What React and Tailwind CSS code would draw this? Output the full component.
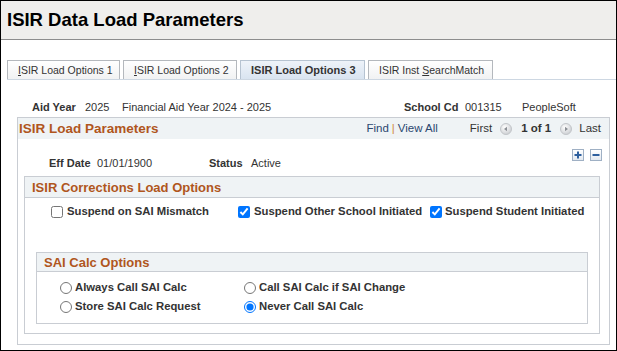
import React from "react";

const Arrow = ({ dir }) => (
  <svg width="12" height="12" viewBox="0 0 12 12" className="shrink-0">
    <defs>
      <radialGradient id={`g${dir}`} cx="40%" cy="35%" r="70%">
        <stop offset="0%" stopColor="#ffffff" />
        <stop offset="100%" stopColor="#c9ccd0" />
      </radialGradient>
    </defs>
    <circle cx="6" cy="6" r="5.5" fill={`url(#g${dir})`} stroke="#c2c5c9" />
    {dir === "left" ? <path d="M4 6 L7 3.8 L7 8.2 Z" fill="#8c9096" /> : <path d="M8 6 L5 3.8 L5 8.2 Z" fill="#8c9096" />}
  </svg>
);

const Tab = ({ children, active, width }) => (
  <div
    className={`h-[19px] flex items-center pl-[10px] border border-b-0 leading-none ${
      active
        ? "bg-gradient-to-b from-[#eef3f9] to-[#d9e4f0] border-[#b6c3d1] font-bold text-[11px] text-[#333]"
        : "bg-gradient-to-b from-white to-[#f1f2f3] border-[#b4b8bd] text-[10.5px] text-[#333]"
    } ${width}`}
  >
    {children}
  </div>
);

const Check = ({ checked }) => (
  <input type="checkbox" defaultChecked={checked} className="w-[12px] h-[12px] m-0 shrink-0" />
);

const Radio = ({ checked }) => (
  <input type="radio" name="sai" defaultChecked={checked} className="w-[12px] h-[12px] m-0 shrink-0" />
);

export default function App() {
  return (
    <div className="w-[617px] h-[351px] border border-black bg-white font-['Liberation_Sans',Arial,sans-serif] text-[#333] overflow-hidden">
      <div className="h-[39px] bg-[#efeeec] border-b border-[#8d8d8d] flex items-center pl-[6px]">
        <h1 className="text-[18.5px] font-bold text-black leading-none">ISIR Data Load Parameters</h1>
      </div>

      <div className="mt-[20px] flex items-end pl-[6px]">
        <div className="flex items-end gap-[3px] border-b border-[#cdd7e2]">
          <Tab width="w-[113px]">
            <span><span className="underline">I</span>SIR Load Options 1</span>
          </Tab>
          <Tab width="w-[114px]">
            <span><span className="underline">I</span>SIR Load Options 2</span>
          </Tab>
          <Tab active width="w-[125px]">
            ISIR Load Options 3
          </Tab>
          <Tab width="w-[125px]">
            <span>ISIR Inst <span className="underline">S</span>earchMatch</span>
          </Tab>
        </div>
        <div className="flex-1 border-b border-[#cdd7e2]" />
      </div>

      <div className="mt-[20px] h-[14px] flex items-center text-[11px] leading-none">
        <span className="ml-[31px] w-[53px] font-bold">Aid Year</span>
        <span className="w-[37px]">2025</span>
        <span className="w-[282px]">Financial Aid Year 2024 - 2025</span>
        <span className="w-[61px] font-bold">School Cd</span>
        <span className="w-[57px]">001315</span>
        <span>PeopleSoft</span>
      </div>

      <div className="mt-[3px] ml-[16px] w-[593px] h-[228px] border border-[#c9cdd3] flex flex-col">
        <div className="h-[21px] bg-[#eff3f5] flex items-center pl-[1px]">
          <span className="text-[13.5px] font-bold text-[#b0561d] leading-none">ISIR Load Parameters</span>
          <div className="ml-auto flex items-center text-[11.5px] leading-none pr-[8px]">
            <span className="text-[#2b4770]">Find</span>
            <span className="mx-[3px] text-[#d08a3c]">|</span>
            <span className="text-[#2b4770]">View All</span>
            <span className="ml-[32px]">First</span>
            <span className="ml-[8px]"><Arrow dir="left" /></span>
            <span className="ml-[9px] font-bold">1 of 1</span>
            <span className="ml-[9px]"><Arrow dir="right" /></span>
            <span className="ml-[7px]">Last</span>
          </div>
        </div>

        <div className="mt-[10px] flex justify-end gap-[6px] pr-[7px]">
          <div className="w-[12px] h-[12px] border border-[#9fb0c4] bg-gradient-to-b from-white to-[#e3e9f0] flex items-center justify-center">
            <svg width="8" height="8" viewBox="0 0 8 8"><path d="M4 0.5 V7.5 M0.5 4 H7.5" stroke="#2d5f9e" strokeWidth="2" /></svg>
          </div>
          <div className="w-[12px] h-[12px] border border-[#9fb0c4] bg-gradient-to-b from-white to-[#e3e9f0] flex items-center justify-center">
            <svg width="8" height="8" viewBox="0 0 8 8"><path d="M0.5 4 H7.5" stroke="#2d5f9e" strokeWidth="2" /></svg>
          </div>
        </div>

        <div className="-mt-[5px] h-[14px] flex items-center text-[11px] leading-none">
          <span className="ml-[31px] w-[48px] font-bold">Eff Date</span>
          <span className="w-[112px]">01/01/1900</span>
          <span className="w-[42px] font-bold">Status</span>
          <span>Active</span>
        </div>

        <div className="mt-[6px] ml-[6px] mr-[9px] h-[158px] border border-[#c9cdd3] flex flex-col">
          <div className="h-[21px] bg-[#eff3f5] border-b border-[#c9cdd3] flex items-center pl-[7px]">
            <span className="text-[13px] font-bold text-[#b0561d] leading-none">ISIR Corrections Load Options</span>
          </div>
          <div className="mt-[7px] h-[14px] flex items-center text-[11.3px] font-bold leading-none">
            <div className="ml-[26px] w-[187px] flex items-center gap-[4px]">
              <Check />
              <span>Suspend on SAI Mismatch</span>
            </div>
            <div className="w-[192px] flex items-center gap-[4px]">
              <Check checked />
              <span>Suspend Other School Initiated</span>
            </div>
            <div className="flex items-center gap-[3px]">
              <Check checked />
              <span>Suspend Student Initiated</span>
            </div>
          </div>

          <div className="mt-[33px] mx-[11px] h-[72px] border border-[#c9cdd3] flex flex-col">
            <div className="h-[19px] bg-[#eff3f5] border-b border-[#c9cdd3] flex items-center pl-[7px]">
              <span className="text-[13px] font-bold text-[#b0561d] leading-none">SAI Calc Options</span>
            </div>
            <div className="mt-[9px] grid grid-cols-[207px_1fr] gap-y-[6px] text-[11.3px] font-bold leading-none">
              <div className="ml-[23px] flex items-center gap-[3px] h-[13px]">
                <Radio />
                <span>Always Call SAI Calc</span>
              </div>
              <div className="flex items-center gap-[3px] h-[13px]">
                <Radio />
                <span>Call SAI Calc if SAI Change</span>
              </div>
              <div className="ml-[23px] flex items-center gap-[3px] h-[13px]">
                <Radio />
                <span>Store SAI Calc Request</span>
              </div>
              <div className="flex items-center gap-[3px] h-[13px]">
                <Radio checked />
                <span>Never Call SAI Calc</span>
              </div>
            </div>
          </div>
        </div>
      </div>
    </div>
  );
}
